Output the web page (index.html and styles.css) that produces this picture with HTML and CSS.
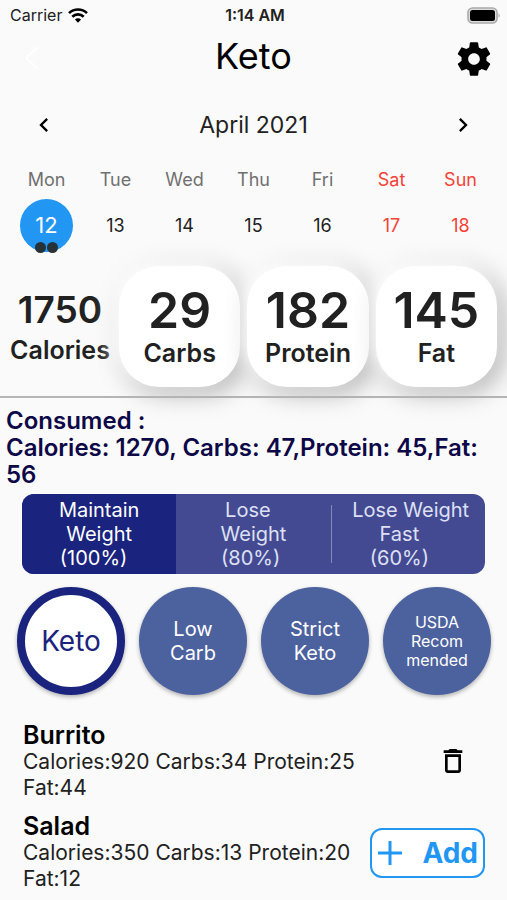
FILE: index.html
```html
<!DOCTYPE html>
<html lang="en">
<head>
  <meta charset="UTF-8" />
  <meta name="viewport" content="width=device-width, initial-scale=1" />
  <title>Keto</title>
  <link rel="stylesheet" href="styles.css">
</head>
<body>
  <div class="status-bar">
    <span class="carrier">Carrier
      <svg width="20" height="15" viewBox="0 0 20 15" fill="none" stroke="#000" stroke-width="2.6">
        <path d="M1 5.2a12.8 12.8 0 0 1 18 0" />
        <path d="M4.3 8.7a8.2 8.2 0 0 1 11.4 0" />
        <path d="M10 14.8l3.1-3.2a4.4 4.4 0 0 0-6.2 0z" fill="#000" stroke="none" />
      </svg>
    </span>
    <span class="time">1:14 AM</span>
    <svg class="battery" width="34" height="17" viewBox="0 0 34 17">
      <rect x="2" y="1" width="29" height="15" rx="4.5" fill="#ddd" stroke="#aaa" stroke-width="1.6" />
      <rect x="4" y="3" width="25" height="11" rx="2.5" />
      <path d="M32.500 6.500v4c1.600-.6 1.600-3.400 0-4z" fill="#aaa" />
    </svg>
  </div>

  <header class="top">
    <button class="icon-btn" aria-label="Back">
      <svg width="40" height="40" viewBox="0 0 40 40" fill="none" stroke="#fff" stroke-width="2"><path d="M25 8L13 19l12 11" /></svg>
    </button>
    <h1>Keto</h1>
    <button class="icon-btn" aria-label="Settings">
      <svg width="40" height="40" viewBox="0 0 24 24"><path d="M19.430 12.980c.04-.32.07-.64.07-.98s-.03-.66-.07-.98l2.110-1.650c.19-.15.24-.42.12-.64l-2-3.460c-.12-.22-.39-.3-.61-.22l-2.490 1c-.52-.4-1.080-.73-1.690-.98l-.38-2.650C14.460 2.180 14.250 2 14 2h-4c-.25 0-.46.18-.49.42l-.38 2.650c-.61.25-1.170.59-1.690.98l-2.490-1c-.23-.09-.49 0-.61.22l-2 3.460c-.13.22-.07.49.12.64l2.110 1.650c-.04.32-.07.65-.07.98s.03.66.07.98l-2.110 1.650c-.19.15-.24.42-.12.64l2 3.460c.12.22.39.3.61.22l2.490-1c.52.4 1.080.73 1.690.98l.38 2.650c.03.24.24.42.49.42h4c.25 0 .46-.18.49-.42l.38-2.650c.61-.25 1.170-.59 1.690-.98l2.490 1c.23.09.49 0 .61-.22l2-3.460c.12-.22.07-.49-.12-.64l-2.110-1.650zM12 15.500c-1.930 0-3.500-1.570-3.500-3.500s1.570-3.500 3.500-3.500 3.500 1.570 3.500 3.500-1.570 3.500-3.500 3.500z" /></svg>
    </button>
  </header>

  <section class="calendar">
    <div class="month">
      <button class="icon-btn" aria-label="Previous week">
        <svg width="28" height="28" viewBox="0 0 24 24"><path d="M15.410 7.410L14 6l-6 6 6 6 1.410-1.410L10.830 12z" /></svg>
      </button>
      <h2>April 2021</h2>
      <button class="icon-btn" aria-label="Next week">
        <svg width="28" height="28" viewBox="0 0 24 24"><path d="M10 6L8.590 7.410 13.170 12l-4.580 4.590L10 18l6-6z" /></svg>
      </button>
    </div>
    <table class="week">
      <thead>
        <tr><th>Mon</th><th>Tue</th><th>Wed</th><th>Thu</th><th>Fri</th><th class="weekend">Sat</th><th class="weekend">Sun</th></tr>
      </thead>
      <tbody>
        <tr>
          <td><span class="today">12<span class="dots"><i></i><i></i></span></span></td>
          <td>13</td><td>14</td><td>15</td><td>16</td>
          <td class="weekend">17</td><td class="weekend">18</td>
        </tr>
      </tbody>
    </table>
  </section>

  <section class="macros">
    <div class="calories"><strong>1750</strong><span>Calories</span></div>
    <div class="card"><strong>29</strong><span>Carbs</span></div>
    <div class="card"><strong>182</strong><span>Protein</span></div>
    <div class="card"><strong>145</strong><span>Fat</span></div>
  </section>

  <main>
    <p class="consumed">Consumed :<br>Calories: 1270, Carbs: 47,Protein: 45,Fat: 56</p>

    <div class="goals">
      <button class="active" aria-pressed="true">Maintain<br>Weight<br>(100%)&nbsp;&nbsp;</button>
      <button aria-pressed="false">Lose&nbsp;&nbsp;<br>Weight<br>(80%)&nbsp;</button>
      <button aria-pressed="false">&nbsp;Lose&nbsp;Weight<br>Fast&nbsp;&nbsp;&nbsp;<br>(60%)&nbsp;&nbsp;&nbsp;</button>
    </div>

    <div class="diets">
      <button class="active" aria-pressed="true">Keto</button>
      <button aria-pressed="false">Low<br>Carb</button>
      <button aria-pressed="false">Strict<br>Keto</button>
      <button class="small" aria-pressed="false">USDA<br>Recom<br>mended</button>
    </div>

    <ul class="foods">
      <li>
        <div>
          <h3>Burrito</h3>
          <p>Calories:920 Carbs:34 Protein:25 Fat:44</p>
        </div>
        <button class="icon-btn" aria-label="Delete Burrito">
          <svg width="32" height="32" viewBox="0 0 24 24"><path d="M6 19c0 1.100.9 2 2 2h8c1.100 0 2-.9 2-2V7H6v12zM8 9h8v10H8V9zm7.500-5l-1-1h-5l-1 1H5v2h14V4z" /></svg>
        </button>
      </li>
      <li>
        <div>
          <h3>Salad</h3>
          <p>Calories:350 Carbs:13 Protein:20 Fat:12</p>
        </div>
      </li>
    </ul>
  </main>

  <button class="add">
    <svg width="26" height="26" viewBox="0 0 26 26" fill="none" stroke="#2196f3" stroke-width="3"><path d="M13 1v24M1 13h24" /></svg>
    Add
  </button>
</body>
</html>
```

FILE: styles.css
```css
* {
  box-sizing: border-box;
}
body {
  margin: 0;
  min-height: 100vh;
  background-color: #fafafa;
  color: #212121;
  font-family: Inter, "Liberation Sans", sans-serif;
}
h1, h2, h3, p, ul {
  margin: 0;
  padding: 0;
  font-weight: 400;
}
button {
  margin: 0;
  padding: 0;
  border: 0;
  background: none;
  color: inherit;
  font-family: inherit;
}
svg {
  display: block;
}
.icon-btn {
  display: flex;
}

/* status bar */
.status-bar {
  display: grid;
  grid-template-columns: 1fr auto 1fr;
  align-items: center;
  height: 30px;
  padding: 0 7px 0 10px;
  font-size: 16px;
}
.carrier {
  display: flex;
  align-items: center;
  gap: 6px;
}
.time {
  font-weight: 600;
}
.battery {
  justify-self: end;
}

/* title */
.top {
  display: flex;
  justify-content: space-between;
  align-items: center;
  height: 58px;
  padding: 0 13px;
}
h1 {
  color: #000;
  font-size: 36px;
  line-height: 42px;
  padding-bottom: 6px;
}

/* calendar */
.calendar {
  padding: 20px 12px 0;
}
.month {
  display: flex;
  justify-content: space-between;
  align-items: center;
  height: 34px;
  padding: 0 18px;
}
h2 {
  font-size: 23px;
}
.week {
  width: 100%;
  margin-top: 26px;
  table-layout: fixed;
  border-collapse: collapse;
  text-align: center;
  font-size: 18px;
}
.week th {
  height: 22px;
  padding: 0;
  color: #707070;
  font-weight: 400;
}
.week td {
  height: 70px;
  padding: 0;
}
.week .weekend {
  color: #f44336;
}
.today {
  position: relative;
  display: flex;
  justify-content: center;
  align-items: center;
  width: 53px;
  height: 53px;
  margin: 0 auto;
  border-radius: 50%;
  background-color: #2196f3;
  color: #fff;
  font-size: 22px;
}
.dots {
  position: absolute;
  bottom: -1px;
  left: 0;
  right: 0;
  display: flex;
  justify-content: center;
  gap: 1px;
}
.dots i {
  width: 11px;
  height: 11px;
  border-radius: 50%;
  background-color: #263238;
}

/* macros */
.macros {
  display: grid;
  grid-template-columns: 6fr 7fr 7fr 7fr;
  gap: 7px;
  padding: 6px 10px 9px 8px;
  border-bottom: 2px solid #b5b5b5;
  font-size: 25px;
  font-weight: 600;
  line-height: 30px;
}
.macros div {
  display: flex;
  flex-direction: column;
  justify-content: center;
  align-items: center;
  min-width: 0;
  padding-bottom: 3px;
}
.macros strong {
  font-weight: 600;
}
.calories strong {
  font-size: 37px;
  line-height: 50px;
}
.card {
  aspect-ratio: 1;
  border-radius: 40px;
  background-color: #fff;
  box-shadow: -5px -5px 18px 1px #fff, 5px 5px 24px 1px #aaa;
}
.card strong {
  font-size: 50px;
  line-height: 56px;
}

/* consumed + goals */
.consumed {
  padding: 9px 6px 6px;
  color: #0d0847;
  font-size: 24px;
  font-weight: 600;
  line-height: 27px;
}
.goals {
  display: grid;
  grid-template-columns: repeat(3, 1fr);
  margin: 0 22px;
  border-radius: 12px;
  overflow: hidden;
  background-color: #444a92;
}
.goals button {
  position: relative;
  padding: 4px 0;
  color: #dde0f5;
  font-size: 20px;
  line-height: 24px;
}
.goals .active {
  background-color: #1a237e;
  color: #fff;
}
.goals button:last-child::before {
  content: "";
  position: absolute;
  left: 0;
  top: 11px;
  bottom: 11px;
  width: 1px;
  background-color: #8488ba;
}

/* diets */
.diets {
  display: grid;
  grid-template-columns: repeat(4, 1fr);
  gap: 14px;
  padding: 13px 16px 0 17px;
}
.diets button {
  aspect-ratio: 1;
  border-radius: 50%;
  background-color: #4c629f;
  color: #fff;
  font-size: 20px;
  line-height: 24px;
  box-shadow: 0 2px 4px rgba(0, 0, 0, 0.3);
}
.diets .active {
  border: 8px solid #1a237e;
  background-color: #fff;
  color: #1a237e;
  font-size: 28px;
}
.diets .small {
  font-size: 16px;
  line-height: 19px;
}

/* foods */
.foods {
  padding: 26px 38px 0 23px;
  list-style: none;
}
.foods li {
  display: grid;
  grid-template-columns: 1fr 32px;
  align-items: center;
  column-gap: 64px;
  padding-bottom: 11px;
}
.foods h3 {
  color: #000;
  font-size: 25px;
  font-weight: 600;
  line-height: 28px;
}
.foods p {
  font-size: 21px;
  line-height: 26px;
}
.add {
  position: fixed;
  right: 22px;
  bottom: 22px;
  display: flex;
  justify-content: space-between;
  align-items: center;
  width: 115px;
  height: 50px;
  padding: 0 5px;
  border: 2px solid #2196f3;
  border-radius: 12px;
  background-color: #fff;
  color: #2196f3;
  font-size: 28px;
  font-weight: 700;
}
```
